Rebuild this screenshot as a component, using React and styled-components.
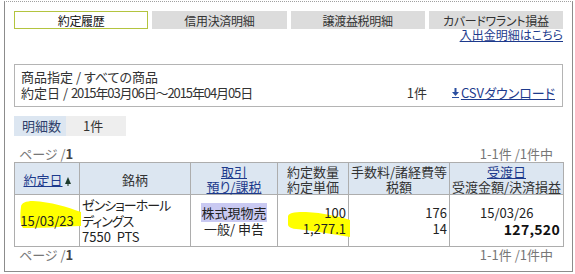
import React from "react";
import styled, { createGlobalStyle } from "styled-components";

const Global = createGlobalStyle`
  html, body { margin: 0; padding: 0; background: #fff; }
  body {
    font-family: "Noto Sans CJK JP", "Noto Sans", sans-serif;
    font-size: 13px;
    color: #333;
    font-feature-settings: "palt";
  }
`;

const Frame = styled.div`
  margin: 1px 0 0 4px;
  width: 569px;
  box-sizing: border-box;
  border: 1px solid #8c8c8c;
  border-top: 1px dotted #a0a0a0;
  padding: 9px 9px 8px 9px;
`;

const Tabs = styled.div`
  display: grid;
  grid-template-columns: repeat(4, 1fr);
  gap: 4px;
`;

const Tab = styled.div`
  height: 18px;
  box-sizing: border-box;
  display: flex;
  align-items: center;
  justify-content: center;
  font-size: 12px;
  letter-spacing: -0.3px;
  color: ${(p) => (p.$active ? "#111" : "#333")};
  background: ${(p) => (p.$active ? "#fff" : "#dcdcdc")};
  border: 1px solid ${(p) => (p.$active ? "#b3c43f" : "#dcdcdc")};
`;

const LinkRow = styled.div`
  text-align: right;
  font-size: 12px;
  line-height: 13px;
  margin-top: -1px;
`;

const A = styled.a`
  color: #1d3a8c;
  text-decoration: underline;
  cursor: pointer;
`;

const InfoBox = styled.div`
  margin-top: 23px;
  border: 1px solid #b4b4b4;
  padding: 4px 7px 5px 6px;
  line-height: 16px;
`;

const InfoLine = styled.div`
  display: flex;
  justify-content: space-between;
  align-items: center;
`;

const DateText = styled.span`
  letter-spacing: -1.1px;
`;

const InfoRight = styled.div`
  display: flex;
  align-items: center;
  gap: 25px;
`;

const CsvLink = styled(A)`
  display: inline-flex;
  align-items: center;
  gap: 2px;
`;

const CountRow = styled.div`
  display: flex;
  margin-top: 9px;
  height: 20px;
  line-height: 20px;
`;

const CountLabel = styled.div`
  width: 52px;
  box-sizing: border-box;
  padding-left: 8px;
  background: #dce6f1;
  color: #2e3f6a;
`;

const CountValue = styled.div`
  width: 60px;
  box-sizing: border-box;
  padding-left: 17px;
  background: #eeeeee;
`;

const PageRow = styled.div`
  display: flex;
  justify-content: space-between;
  line-height: 16px;
  padding: 0 10px 0 5px;
  margin-top: ${(p) => p.$mt || 0}px;
  color: #777;
`;

const PageNum = styled.b`
  color: #444;
`;

const Table = styled.table`
  width: 549px;
  border-collapse: collapse;
  table-layout: fixed;
`;

const Th = styled.th`
  background: #dce6f1;
  border: 1px solid #adadad;
  font-weight: normal;
  line-height: 15px;
  padding: 1px 0 0;
  text-align: center;
  color: #333;
  white-space: nowrap;
`;

const Td = styled.td`
  position: relative;
  border: 1px solid #adadad;
  line-height: 16px;
  padding: 1px ${(p) => (p.$pr != null ? p.$pr : 2)}px 1px ${(p) => (p.$pl != null ? p.$pl : 2)}px;
  text-align: ${(p) => p.$align || "left"};
  vertical-align: middle;
  color: #222;
  white-space: nowrap;
`;

const Kana = styled.span`
  letter-spacing: -1px;
`;

const Txt = styled.span`
  position: relative;
  z-index: 1;
`;

const Marker = styled.svg`
  position: absolute;
  left: 0;
  top: 0;
  overflow: visible;
  z-index: 0;
`;

const Tag = styled.span`
  background: #c9c9f2;
`;

const Amount = styled.div`
  text-align: right;
  font-weight: bold;
  font-size: 14px;
  letter-spacing: 0.3px;
  color: #111;
`;

const SortIcon = () => (
  <svg width="6" height="10" viewBox="0 0 6 10" style={{ marginLeft: 2, verticalAlign: "-1px" }}>
    <polygon points="3,1 6,8 0,8" fill="#1d3a2a" />
    <rect x="2.5" y="8" width="1" height="2" fill="#1d3a2a" />
  </svg>
);

const DownIcon = () => (
  <svg width="7" height="10" viewBox="0 0 7 10">
    <rect x="2.5" y="0" width="2" height="4" fill="#2a4ea0" />
    <polygon points="0,4 7,4 3.5,8" fill="#2a4ea0" />
    <rect x="0" y="9" width="7" height="1" fill="#2a4ea0" />
  </svg>
);

export default function App() {
  return (
    <>
      <Global />
      <Frame>
        <Tabs>
          <Tab $active>約定履歴</Tab>
          <Tab>信用決済明細</Tab>
          <Tab>譲渡益税明細</Tab>
          <Tab>カバードワラント損益</Tab>
        </Tabs>
        <LinkRow>
          <A>入出金明細はこちら</A>
        </LinkRow>
        <InfoBox>
          <div>商品指定 / すべての商品</div>
          <InfoLine>
            <span>
              約定日 / <DateText>2015年03月06日〜2015年04月05日</DateText>
            </span>
            <InfoRight>
              <span>1件</span>
              <CsvLink>
                <DownIcon />
                CSVダウンロード
              </CsvLink>
            </InfoRight>
          </InfoLine>
        </InfoBox>
        <CountRow>
          <CountLabel>明細数</CountLabel>
          <CountValue>1件</CountValue>
        </CountRow>
        <PageRow $mt={10}>
          <span>
            ページ /<PageNum>1</PageNum>
          </span>
          <span>1-1件 /1件中</span>
        </PageRow>
        <Table>
          <colgroup>
            <col style={{ width: 65 }} />
            <col style={{ width: 111 }} />
            <col style={{ width: 87 }} />
            <col style={{ width: 71 }} />
            <col style={{ width: 101 }} />
            <col style={{ width: 114 }} />
          </colgroup>
          <thead>
            <tr style={{ height: 32 }}>
              <Th>
                <A>約定日</A>
                <SortIcon />
              </Th>
              <Th>銘柄</Th>
              <Th>
                <A>取引</A>
                <br />
                <A>預り/課税</A>
              </Th>
              <Th>
                約定数量
                <br />
                約定単価
              </Th>
              <Th>
                手数料/諸経費等
                <br />
                税額
              </Th>
              <Th>
                <A>受渡日</A>
                <br />
                受渡金額/決済損益
              </Th>
            </tr>
          </thead>
          <tbody>
            <tr style={{ height: 52 }}>
              <Td $align="center">
                <Marker width="65" height="52">
                  <path
                    d="M6,12 C6,8 11,6 18,6 C36,7 52,12 66,17 L66,31 C45,32 25,33 8,33 C5,30 5,20 6,12 Z"
                    fill="#ffff00"
                  />
                </Marker>
                <Txt>15/03/23</Txt>
              </Td>
              <Td>
                <Kana>ゼンショーホール</Kana>
                <br />
                <Kana>ディングス</Kana>
                <br />
                7550&nbsp;&nbsp;PTS
              </Td>
              <Td $align="center">
                <Tag>株式現物売</Tag>
                <br />
                一般/ 申告
              </Td>
              <Td $align="right" $pr={2}>
                <Marker width="71" height="52">
                  <path
                    d="M10,21 C11,17 20,17 28,17 C45,18 60,21 72,25 L72,42 C58,40 43,37 28,35 C18,34 11,34 10,30 Z"
                    fill="#ffff00"
                  />
                </Marker>
                <Txt>
                  100
                  <br />
                  1,277.1
                </Txt>
              </Td>
              <Td $align="right" $pr={2}>
                176
                <br />
                14
              </Td>
              <Td $pl={30} $pr={3}>
                15/03/26
                <Amount>127,520</Amount>
              </Td>
            </tr>
          </tbody>
        </Table>
        <PageRow>
          <span>
            ページ /<PageNum>1</PageNum>
          </span>
          <span>1-1件 /1件中</span>
        </PageRow>
      </Frame>
    </>
  );
}
